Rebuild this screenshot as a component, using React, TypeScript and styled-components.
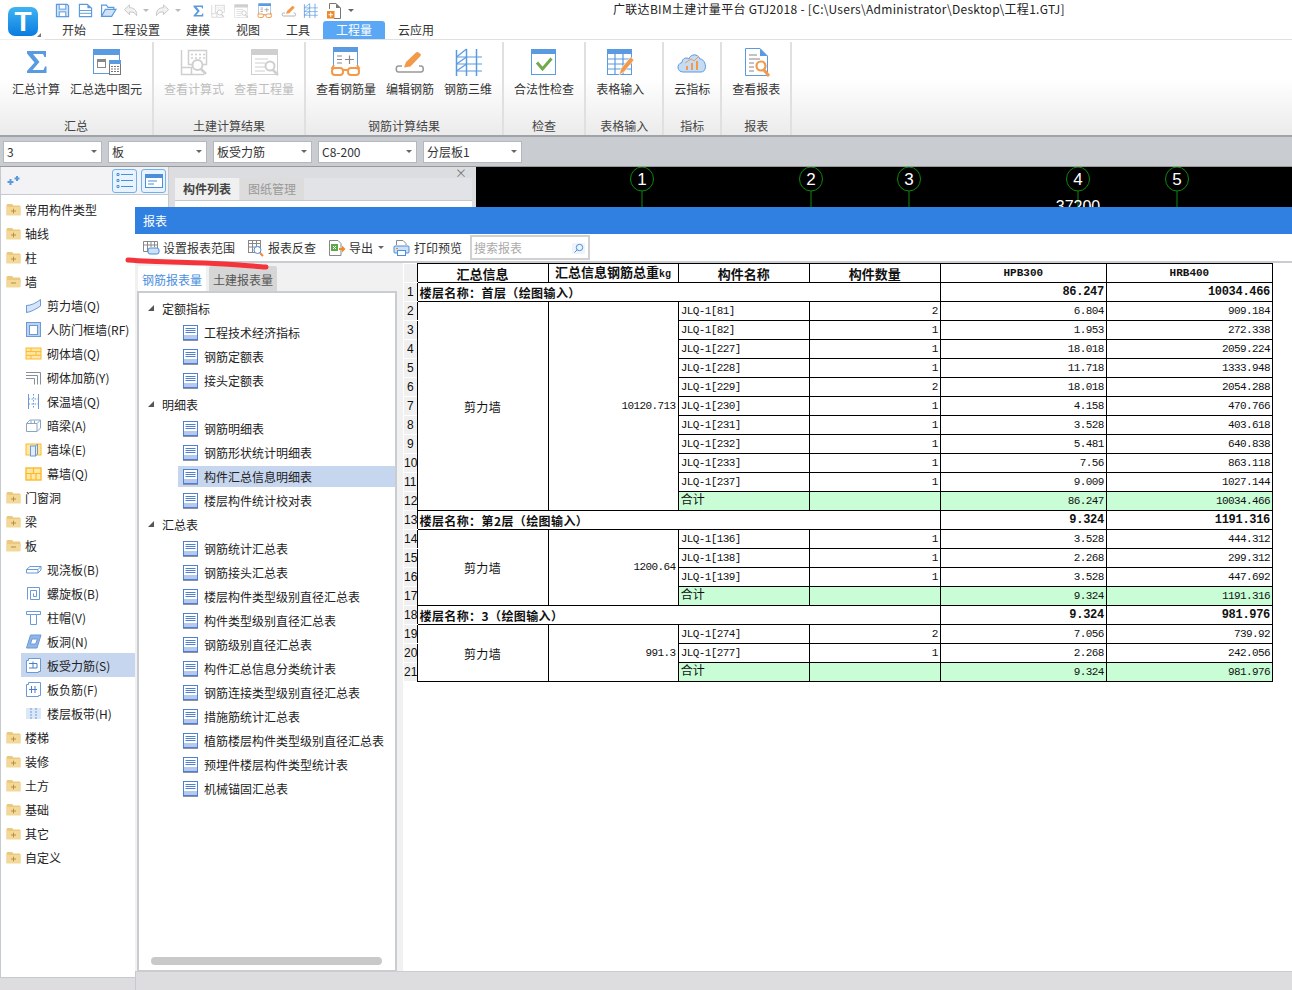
import React from "react";
import styled, { createGlobalStyle } from "styled-components";

const CJK = `"Noto Sans CJK SC", "Liberation Sans", sans-serif`;
const MONO = `"Liberation Mono", "Noto Sans CJK SC", monospace`;
const BLUE = "#5a9ae0";
const ORANGE = "#f39a4a";
const GREY = "#cfcfcf";

const GlobalStyle = createGlobalStyle`
  html, body { margin: 0; padding: 0; background: #fff; }
  body { font-family: ${CJK}; font-size: 12px; color: #222; }
  svg { display: block; flex: none; }
`;

const Caret = styled.span<{ $dim?: boolean }>`
  display: block;
  width: 0;
  height: 0;
  border-left: 3px solid transparent;
  border-right: 3px solid transparent;
  border-top: 3px solid ${(p) => (p.$dim ? "#bbb" : "#666")};
`;

/* ---------- ribbon + quick access icons ---------- */

type IconProps = { size?: number };

const Svg = ({ size = 32, vb = 32, children }: IconProps & { vb?: number; children: React.ReactNode }) => (
  <svg width={size} height={size} viewBox={`0 0 ${vb} ${vb}`} fill="none">
    {children}
  </svg>
);

const SigmaIcon = ({ size }: IconProps) => (
  <Svg size={size}>
    <path d="M7 5H26V11H24.5L23 8H13L19.5 16L12.5 24H23.5L25 20.5H26.5V27H7V25L14.5 16.5L7 7.5Z" fill={BLUE} />
  </Svg>
);

const SelectSumIcon = ({ size }: IconProps) => (
  <Svg size={size}>
    <rect x="3.5" y="3.5" width="26" height="24" fill="#fff" stroke={BLUE} />
    <rect x="3" y="3" width="27" height="6" fill={BLUE} />
    <rect x="7.5" y="15.5" width="8" height="6" stroke="#888" />
    <rect x="7" y="13" width="9" height="2" fill="#888" />
    <rect x="19.5" y="14.5" width="11" height="14" fill="#fff" stroke="#777" />
    <rect x="19" y="14" width="12" height="4" fill={BLUE} />
    <path d="M21 20.5H29M21 23H29M21 25.5H29" stroke="#777" strokeDasharray="2 1" />
  </Svg>
);

const FormulaIcon = ({ size, color = GREY }: IconProps & { color?: string }) => (
  <Svg size={size}>
    <path d="M3.5 4V28.5H26" stroke={color} strokeWidth="1.5" />
    <path d="M3.5 21.5H13.5V28" stroke={color} strokeWidth="1.5" />
    <rect x="10.5" y="4.5" width="18" height="14" fill="#fff" stroke={color} strokeWidth="1.5" />
    <path d="M13 8.5H27M13 12H27" stroke={color} strokeWidth="1.5" strokeDasharray="2 2" />
    <circle cx="19.5" cy="19" r="5" fill="#fff" stroke={color} strokeWidth="2" />
    <path d="M23 23L28 28" stroke={color} strokeWidth="2.5" />
  </Svg>
);

const QuantityIcon = ({ size, color = GREY }: IconProps & { color?: string }) => (
  <Svg size={size}>
    <rect x="3.5" y="3.5" width="26" height="25" fill="#fff" stroke={color} />
    <rect x="3" y="3" width="27" height="6" fill={color} />
    <path d="M7 13H20M7 17H17M7 21H17M7 25H17" stroke={color} strokeWidth="1.2" />
    <circle cx="22" cy="20" r="4.5" fill="#fff" stroke={color} strokeWidth="2" />
    <path d="M25 24L30 29" stroke={color} strokeWidth="2.5" />
  </Svg>
);

const GlassesIcon = ({ size }: IconProps) => (
  <Svg size={size}>
    <rect x="3.5" y="1.5" width="24" height="22" fill="#fff" stroke={BLUE} />
    <rect x="3" y="1" width="25" height="5" fill={BLUE} />
    <path d="M7 10H12M7 13.5H12M7 17H12M15 13.5H24M19.5 9.5V18" stroke="#888" strokeWidth="1.2" />
    <path d="M1.5 23L4 19M29.5 23L27 19" stroke={ORANGE} strokeWidth="2" />
    <rect x="2" y="22" width="11" height="7" rx="3" fill="#fff" stroke={ORANGE} strokeWidth="2" />
    <rect x="18" y="22" width="11" height="7" rx="3" fill="#fff" stroke={ORANGE} strokeWidth="2" />
    <path d="M13 24H18" stroke={ORANGE} strokeWidth="2" />
  </Svg>
);

const EditRebarIcon = ({ size }: IconProps) => (
  <Svg size={size}>
    <path d="M8 20H4.5C1.5 20 1.5 26 4.5 26H27C30 26 30 20 27 20H25" stroke="#999" strokeWidth="1.5" />
    <path d="M10 21.5L12 16L22 6.5C23.5 5 25.5 7 27 8.5L26.5 10L16.5 20.5Z" fill={ORANGE} />
  </Svg>
);

const Rebar3dIcon = ({ size }: IconProps) => (
  <Svg size={size}>
    <path d="M4.5 4V30M14.5 3V30M24.5 3V30" stroke={BLUE} strokeWidth="1.5" />
    <path d="M4 11H30M4 18H30M4 25H30" stroke={BLUE} strokeWidth="1.2" />
    <path d="M4.5 11L14.5 3M4.5 18L14.5 11M4.5 25L14.5 18" stroke={BLUE} strokeWidth="1.2" />
  </Svg>
);

const CheckIcon = ({ size }: IconProps) => (
  <Svg size={size}>
    <rect x="3.5" y="3.5" width="24" height="25" fill="#fff" stroke={BLUE} />
    <rect x="3" y="3" width="25" height="5" fill={BLUE} />
    <path d="M9 16.5L14.5 23L23.5 12.5" stroke="#74a84f" strokeWidth="3" />
  </Svg>
);

const TableInputIcon = ({ size }: IconProps) => (
  <Svg size={size}>
    <rect x="3.5" y="3.5" width="24" height="25" fill="#fff" stroke={BLUE} />
    <rect x="3" y="3" width="25" height="5" fill={BLUE} />
    <path d="M3.5 13H27M3.5 18H27M3.5 23H27M11 8V28M19 8V28" stroke={BLUE} strokeWidth="1.2" />
    <path d="M15 29L17 22.5L26.5 11L30 14L20.5 25.5Z" fill={ORANGE} stroke="#fff" strokeWidth=".6" />
  </Svg>
);

const CloudIcon = ({ size }: IconProps) => (
  <Svg size={size}>
    <path d="M7 26C1 26 0 18 6 16.5C6 12 11 11 13 13C14 8 22 7 24 13C30 13 32 26 25 26Z" fill="#c6dcf5" stroke={BLUE} />
    <path d="M11 24V20M16 24V17M21 24V15" stroke={ORANGE} strokeWidth="2" />
    <path d="M9 17L15 13L18 15L23 10" stroke={ORANGE} />
  </Svg>
);

const ReportIcon = ({ size }: IconProps) => (
  <Svg size={size}>
    <path d="M5.5 2.5H20L27.5 10V29.5H5.5Z" fill="#fff" stroke={BLUE} />
    <path d="M20 2.5V10H27.5Z" fill={BLUE} />
    <path d="M9 9H17M9 13H20M9 17H14M9 21H14M9 25H14" stroke="#888" strokeWidth="1.2" />
    <circle cx="21" cy="20" r="4.5" fill="#fff" stroke={ORANGE} strokeWidth="2.2" />
    <path d="M24 24L29 30" stroke={ORANGE} strokeWidth="3" />
  </Svg>
);

const SaveIcon = () => (
  <Svg size={15} vb={16}>
    <path d="M1.5 1.5H13L14.5 3V14.5H1.5Z" fill="#cfe2f7" stroke={BLUE} strokeWidth="1.2" />
    <rect x="4.5" y="1.5" width="7" height="5" fill="#fff" stroke={BLUE} />
    <rect x="4.5" y="9.5" width="7" height="5" fill="#fff" stroke={BLUE} />
  </Svg>
);

const NewIcon = () => (
  <Svg size={15} vb={16}>
    <path d="M1.5 1.5H10L14.5 5.5V14.5H1.5Z" fill="#fff" stroke={BLUE} strokeWidth="1.2" />
    <path d="M10 1.5V5.5H14.5Z" fill={BLUE} />
    <path d="M1.5 8H14.5M1.5 11H14.5" stroke={BLUE} />
  </Svg>
);

const OpenIcon = () => (
  <Svg size={17} vb={16}>
    <path d="M1.5 13.5V3H6L7.5 5H13V7" stroke={BLUE} strokeWidth="1.1" />
    <path d="M1.5 13.5L5 7H15L11 13.5Z" fill="#cfe2f7" stroke={BLUE} strokeWidth="1.1" />
  </Svg>
);

const ArrowIcon = ({ flip }: { flip?: boolean }) => (
  <svg width="15" height="15" viewBox="0 0 16 16" fill="none" style={flip ? { transform: "scaleX(-1)" } : undefined}>
    <path d="M1.5 7L7 2V5C12 5 15 8 14.5 13.5C13 10.5 11 9.5 7 9.5V12.5Z" fill="#f2f2f2" stroke="#c4c4c4" />
  </svg>
);

const NewPageIcon = () => (
  <Svg size={16} vb={16}>
    <path d="M3.5 6V.5H10L14.5 5V15.5H8" fill="#fff" stroke="#777" />
    <path d="M10 .5V5H14.5Z" fill="#777" />
    <rect x="1" y="8" width="7.5" height="7.5" fill="#ee8a2c" />
    <path d="M4.7 9.5V14M2.5 11.7H7" stroke="#fff" />
  </Svg>
);

/* ---------- sidebar icons ---------- */

const FolderIcon = ({ open }: { open?: boolean }) => (
  <Svg size={15} vb={15}>
    <path d="M.5 3.5C.5 2.5 1 2 2 2H6L7.5 3.5H13C14 3.5 14.5 4 14.5 5V13H.5Z" fill="#ecc97e" />
    <path d={open ? "M.5 6H15L13.5 13.5H.5Z" : "M.5 5H14.5V13.5H.5Z"} fill="#f3d999" />
    <path d="M5 9H10" stroke="#b88f3c" />
    {!open && <path d="M7.5 6.7V11.3" stroke="#b88f3c" />}
  </Svg>
);

const ICON_STROKE = "#6a9ad8";
const YELLOW = "#fdb92c";

const childIcons: Record<string, React.ReactNode> = {
  shear: (
    <>
      <path d="M1.5 8.5C6 8.5 11 6 15.5 2.5V9C11 12 6 15 1.5 15.5Z" fill="#d6e5f7" stroke={ICON_STROKE} />
      <path d="M1.5 8.5V15.5" stroke={ICON_STROKE} />
    </>
  ),
  rf: (
    <>
      <rect x="1.5" y="1.5" width="14" height="14" fill="#bcd3ef" stroke={ICON_STROKE} />
      <rect x="4.5" y="4.5" width="8" height="9" fill="#fff" stroke={ICON_STROKE} />
    </>
  ),
  brick: (
    <>
      <rect x="1" y="3" width="15" height="11" fill="#ffe7a8" stroke={YELLOW} />
      <path d="M1 6.6H16M1 10.3H16M6 3V6.6M11 6.6V10.3M6 10.3V14" stroke={YELLOW} />
    </>
  ),
  bar: <path d="M1 3.5H15.5V15.5M1 6.5H12.5V15.5M1 9.5H9.5V15.5" stroke="#8a8f96" />,
  insulate: (
    <>
      <path d="M3.5 1V16M13.5 1V16" stroke={ICON_STROKE} />
      <path d="M8.5 1V16M3.5 6H13.5M3.5 11H13.5" stroke={ICON_STROKE} strokeDasharray="1.5 1.5" />
    </>
  ),
  beam: (
    <>
      <path d="M1.5 6.5L5 3H15.5V11L12 14.5H1.5Z" fill="#fff" stroke="#8aa4c4" />
      <path d="M1.5 6.5H12V14.5M12 6.5L15.5 3M6 3.5V6.5M9.5 3.5V6.5" stroke="#8aa4c4" />
    </>
  ),
  pier: (
    <>
      <rect x="1" y="3" width="15" height="11" fill="#ffe7a8" stroke={YELLOW} />
      <rect x="5.5" y="5" width="5" height="10" fill="#e3edf9" stroke={ICON_STROKE} />
      <path d="M10.5 5L12.5 3V13L10.5 15" stroke={ICON_STROKE} />
    </>
  ),
  curtain: (
    <>
      <rect x="1" y="3" width="15" height="12" fill="#ffe7a8" stroke={YELLOW} strokeWidth="1.4" />
      <path d="M1 8.5H16M8.5 3V8.5M6 8.5V15M11 8.5V15" stroke={YELLOW} strokeWidth="1.2" />
    </>
  ),
  slab: <path d="M1.5 8.5L5 5.5H16L13 8.5V12H1.5ZM1.5 8.5H13M13 12L16 9V5.5" fill="#fff" stroke={ICON_STROKE} />,
  spiral: <path d="M2.5 14.5V2.5H14.5V14.5H5.5V5.5H11.5V11.5H8.5V8.5" stroke={ICON_STROKE} />,
  cap: <path d="M1.5 2.5H15.5V5.5H11.5V15.5H5.5V5.5H1.5ZM5.5 5.5H11.5" fill="#fff" stroke={ICON_STROKE} />,
  hole: (
    <>
      <path d="M5.5 2H16L12 15H1.5Z" fill="#8fb5e6" stroke={ICON_STROKE} />
      <path d="M7 6H12.5L10.5 11H5.5Z" fill="#fff" stroke={ICON_STROKE} />
    </>
  ),
  rebar: (
    <>
      <path d="M1.5 3.5H3.5V1.5H15.5V14.5H13.5V15.5H1.5Z" fill="#fff" stroke={ICON_STROKE} />
      <path d="M4 6.5H12V11H4M8 4.5V11" stroke="#4a7fc4" />
    </>
  ),
  negative: (
    <>
      <path d="M1.5 3.5H3.5V1.5H15.5V14.5H13.5V15.5H1.5Z" fill="#fff" stroke={ICON_STROKE} />
      <path d="M4 8.5H12M6.5 5V12M10 5V12" stroke="#4a7fc4" />
    </>
  ),
  band: (
    <>
      <rect x="1" y="3" width="15" height="11" fill="#dbe8f8" />
      <path d="M6 3V14M11 3V14" stroke={ICON_STROKE} strokeDasharray="2 1" />
    </>
  ),
};

const ChildIcon = ({ name }: { name: string }) => <Svg size={17} vb={17}>{childIcons[name]}</Svg>;

const DocIcon = () => (
  <Svg size={16} vb={16}>
    <rect x="1" y="1" width="15" height="15" fill="#8b93a3" />
    <rect x="1.5" y=".5" width="14" height="14" fill="#fff" stroke="#4f7fd0" />
    <rect x="2" y="10" width="13" height="4" fill="#b6c8ee" />
    <path d="M3.5 3.5H13.5M3.5 5.5H13.5M3.5 7.5H13.5" stroke="#4f7fd0" />
  </Svg>
);

/* ---------- data ---------- */

const quickSlots: { w: number; node: React.ReactNode }[] = [
  { w: 23, node: <SaveIcon /> },
  { w: 22, node: <NewIcon /> },
  { w: 23, node: <OpenIcon /> },
  { w: 20, node: <ArrowIcon /> },
  { w: 12, node: <Caret $dim /> },
  { w: 20, node: <ArrowIcon flip /> },
  { w: 15, node: <Caret $dim /> },
  { w: 20, node: <SigmaIcon size={16} /> },
  { w: 23, node: <FormulaIcon size={16} /> },
  { w: 24, node: <QuantityIcon size={16} /> },
  { w: 24, node: <GlassesIcon size={16} /> },
  { w: 21, node: <EditRebarIcon size={16} /> },
  { w: 24, node: <Rebar3dIcon size={17} /> },
  { w: 22, node: <NewPageIcon /> },
  { w: 12, node: <Caret /> },
];

const tabs = ["开始", "工程设置", "建模", "视图", "工具", "工程量", "云应用"];

const ribbonGroups: {
  title: string;
  left?: number;
  right?: number;
  items: { label: string; icon: React.ReactNode; off?: boolean }[];
}[] = [
  {
    title: "汇总",
    left: 12,
    items: [
      { label: "汇总计算", icon: <SigmaIcon /> },
      { label: "汇总选中图元", icon: <SelectSumIcon /> },
    ],
  },
  {
    title: "土建计算结果",
    items: [
      { label: "查看计算式", icon: <FormulaIcon />, off: true },
      { label: "查看工程量", icon: <QuantityIcon />, off: true },
    ],
  },
  {
    title: "钢筋计算结果",
    items: [
      { label: "查看钢筋量", icon: <GlassesIcon /> },
      { label: "编辑钢筋", icon: <EditRebarIcon /> },
      { label: "钢筋三维", icon: <Rebar3dIcon /> },
    ],
  },
  { title: "检查", items: [{ label: "合法性检查", icon: <CheckIcon /> }] },
  { title: "表格输入", right: 18, items: [{ label: "表格输入", icon: <TableInputIcon /> }] },
  { title: "指标", items: [{ label: "云指标", icon: <CloudIcon /> }] },
  { title: "报表", items: [{ label: "查看报表", icon: <ReportIcon /> }] },
];

const combos = ["3", "板", "板受力筋", "C8-200", "分层板1"];

const sideTree: { label: string; open?: boolean; kids?: { label: string; icon: string; on?: boolean }[] }[] = [
  { label: "常用构件类型" },
  { label: "轴线" },
  { label: "柱" },
  {
    label: "墙",
    open: true,
    kids: [
      { label: "剪力墙(Q)", icon: "shear" },
      { label: "人防门框墙(RF)", icon: "rf" },
      { label: "砌体墙(Q)", icon: "brick" },
      { label: "砌体加筋(Y)", icon: "bar" },
      { label: "保温墙(Q)", icon: "insulate" },
      { label: "暗梁(A)", icon: "beam" },
      { label: "墙垛(E)", icon: "pier" },
      { label: "幕墙(Q)", icon: "curtain" },
    ],
  },
  { label: "门窗洞" },
  { label: "梁" },
  {
    label: "板",
    open: true,
    kids: [
      { label: "现浇板(B)", icon: "slab" },
      { label: "螺旋板(B)", icon: "spiral" },
      { label: "柱帽(V)", icon: "cap" },
      { label: "板洞(N)", icon: "hole" },
      { label: "板受力筋(S)", icon: "rebar", on: true },
      { label: "板负筋(F)", icon: "negative" },
      { label: "楼层板带(H)", icon: "band" },
    ],
  },
  { label: "楼梯" },
  { label: "装修" },
  { label: "土方" },
  { label: "基础" },
  { label: "其它" },
  { label: "自定义" },
];

const reportTree: { title: string; items: string[] }[] = [
  { title: "定额指标", items: ["工程技术经济指标", "钢筋定额表", "接头定额表"] },
  { title: "明细表", items: ["钢筋明细表", "钢筋形状统计明细表", "构件汇总信息明细表", "楼层构件统计校对表"] },
  {
    title: "汇总表",
    items: [
      "钢筋统计汇总表",
      "钢筋接头汇总表",
      "楼层构件类型级别直径汇总表",
      "构件类型级别直径汇总表",
      "钢筋级别直径汇总表",
      "构件汇总信息分类统计表",
      "钢筋连接类型级别直径汇总表",
      "措施筋统计汇总表",
      "植筋楼层构件类型级别直径汇总表",
      "预埋件楼层构件类型统计表",
      "机械锚固汇总表",
    ],
  },
];

type Section = {
  floor: string;
  hpb: string;
  hrb: string;
  total: string;
  rows: [string, string, string, string][];
};

const sections: Section[] = [
  {
    floor: "楼层名称：首层（绘图输入）",
    hpb: "86.247",
    hrb: "10034.466",
    total: "10120.713",
    rows: [
      ["JLQ-1[81]", "2", "6.804", "909.184"],
      ["JLQ-1[82]", "1", "1.953", "272.338"],
      ["JLQ-1[227]", "1", "18.018", "2059.224"],
      ["JLQ-1[228]", "1", "11.718", "1333.948"],
      ["JLQ-1[229]", "2", "18.018", "2054.288"],
      ["JLQ-1[230]", "1", "4.158", "470.766"],
      ["JLQ-1[231]", "1", "3.528", "403.618"],
      ["JLQ-1[232]", "1", "5.481", "640.838"],
      ["JLQ-1[233]", "1", "7.56", "863.118"],
      ["JLQ-1[237]", "1", "9.009", "1027.144"],
    ],
  },
  {
    floor: "楼层名称：第2层（绘图输入）",
    hpb: "9.324",
    hrb: "1191.316",
    total: "1200.64",
    rows: [
      ["JLQ-1[136]", "1", "3.528", "444.312"],
      ["JLQ-1[138]", "1", "2.268", "299.312"],
      ["JLQ-1[139]", "1", "3.528", "447.692"],
    ],
  },
  {
    floor: "楼层名称：3（绘图输入）",
    hpb: "9.324",
    hrb: "981.976",
    total: "991.3",
    rows: [
      ["JLQ-1[274]", "2", "7.056", "739.92"],
      ["JLQ-1[277]", "1", "2.268", "242.056"],
    ],
  },
];

const axes = [
  { n: "1", x: 166 },
  { n: "2", x: 335 },
  { n: "3", x: 433 },
  { n: "4", x: 602 },
  { n: "5", x: 701 },
];

/* ---------- report table ---------- */

function ReportTable() {
  let row = 0;
  return (
    <Table>
      <colgroup>
        <col width={13} />
        <col width={131} />
        <col width={130} />
        <col width={131} />
        <col width={131} />
        <col width={166} />
        <col width={166} />
      </colgroup>
      <tbody>
        <HeadRow>
          <RowNo />
          <HeadCell>汇总信息</HeadCell>
          <HeadCell>汇总信息钢筋总重<Kg>kg</Kg></HeadCell>
          <HeadCell>构件名称</HeadCell>
          <HeadCell>构件数量</HeadCell>
          <HeadCell $mono>HPB300</HeadCell>
          <HeadCell $mono>HRB400</HeadCell>
        </HeadRow>
        {sections.map((s) => (
          <React.Fragment key={s.floor}>
            <tr>
              <RowNo>{++row}</RowNo>
              <FloorCell colSpan={4}>{s.floor}</FloorCell>
              <NumCell $bold>{s.hpb}</NumCell>
              <NumCell $bold>{s.hrb}</NumCell>
            </tr>
            {s.rows.map((r, i) => (
              <tr key={r[0]}>
                <RowNo>{++row}</RowNo>
                {i === 0 && <TypeCell rowSpan={s.rows.length + 1}>剪力墙</TypeCell>}
                {i === 0 && <NumCell rowSpan={s.rows.length + 1}>{s.total}</NumCell>}
                <NameCell>{r[0]}</NameCell>
                <NumCell>{r[1]}</NumCell>
                <NumCell>{r[2]}</NumCell>
                <NumCell>{r[3]}</NumCell>
              </tr>
            ))}
            <tr>
              <RowNo>{++row}</RowNo>
              <NameCell $green>合计</NameCell>
              <NumCell $green />
              <NumCell $green>{s.hpb}</NumCell>
              <NumCell $green>{s.hrb}</NumCell>
            </tr>
          </React.Fragment>
        ))}
      </tbody>
    </Table>
  );
}

/* ---------- page ---------- */

export default function App() {
  return (
    <Root>
      <GlobalStyle />
      <Header>
        <LogoPanel>
          <svg width="30" height="29" viewBox="0 0 30 29">
            <defs>
              <linearGradient id="logo" x1="0" y1="0" x2="0" y2="1">
                <stop offset="0" stopColor="#3fb4f2" />
                <stop offset="1" stopColor="#0a7ce0" />
              </linearGradient>
            </defs>
            <rect width="30" height="29" rx="7" fill="url(#logo)" />
            <text x="15" y="24" textAnchor="middle" fontFamily="Liberation Sans" fontWeight="700" fontSize="28" fill="#fff">
              T
            </text>
          </svg>
          <LogoGrip />
        </LogoPanel>
        <HeaderMain>
          <TopRow>
            <QuickBar>
              {quickSlots.map((s, i) => (
                <QuickSlot key={i} $w={s.w}>{s.node}</QuickSlot>
              ))}
            </QuickBar>
            <Title>广联达BIM土建计量平台 GTJ2018 - [C:\Users\Administrator\Desktop\工程1.GTJ]</Title>
          </TopRow>
          <TabRow>
            {tabs.map((t) => (
              <Tab key={t} $active={t === "工程量"}>{t}</Tab>
            ))}
          </TabRow>
        </HeaderMain>
      </Header>

      <Ribbon>
        {ribbonGroups.map((g) => (
          <RibbonGroup key={g.title}>
            <RibbonItems $left={g.left} $right={g.right}>
              {g.items.map((it) => (
                <RibbonItem key={it.label} $off={it.off}>
                  {it.icon}
                  <span>{it.label}</span>
                </RibbonItem>
              ))}
            </RibbonItems>
            <GroupTitle>{g.title}</GroupTitle>
          </RibbonGroup>
        ))}
      </Ribbon>

      <ComboBar>
        {combos.map((c) => (
          <Combo key={c}>
            {c}
            <ComboCaret />
          </Combo>
        ))}
      </ComboBar>

      <Main>
        <Sidebar>
          <SideTools>
            <svg width="14" height="12" viewBox="0 0 14 12">
              <path d="M3.5 4V10M.5 7H6.5" stroke={BLUE} strokeWidth="2" />
              <path d="M10 1V6M7.5 3.5H12.5" stroke={BLUE} strokeWidth="2" />
            </svg>
            <SideButtons>
              <SideButton>
                <svg width="18" height="18" viewBox="0 0 18 18">
                  <path d="M5 2.5H17M5 8.5H17M5 14.5H17" stroke="#4a8fd8" />
                  <path d="M1 1.5h2v2h-2zM1 7.5h2v2h-2zM1 13.5h2v2h-2z" stroke="#4a8fd8" fill="none" />
                </svg>
              </SideButton>
              <SideButton>
                <svg width="18" height="18" viewBox="0 0 18 18">
                  <rect x=".5" y="2.5" width="17" height="13" fill="#fff" stroke="#4a8fd8" />
                  <rect x="1" y="2" width="16" height="4" fill="#4a8fd8" />
                  <path d="M3 9H12M3 12H9" stroke="#4a8fd8" />
                </svg>
              </SideButton>
            </SideButtons>
          </SideTools>
          <SideTree>
            {sideTree.map((g) => (
              <React.Fragment key={g.label}>
                <SideGroup>
                  <FolderIcon open={g.open} />
                  {g.label}
                </SideGroup>
                {g.kids?.map((k) => (
                  <SideChild key={k.label} $on={k.on}>
                    <ChildIcon name={k.icon} />
                    {k.label}
                  </SideChild>
                ))}
              </React.Fragment>
            ))}
          </SideTree>
        </Sidebar>

        <ListPanel>
          <ListTop>×</ListTop>
          <ListTabs>
            <ListTab $active>构件列表</ListTab>
            <ListTab>图纸管理</ListTab>
          </ListTabs>
        </ListPanel>

        <Canvas>
          <svg width="816" height="40" viewBox="0 0 816 40">
            {axes.map((a) => (
              <g key={a.n}>
                <ellipse cx={a.x} cy="12" rx="11.5" ry="12" stroke="#0a8a0a" fill="none" />
                <path d={`M${a.x} 24V40`} stroke="#0a8a0a" />
                <text x={a.x} y="18" textAnchor="middle" fill="#fff" fontSize="17" fontFamily="Liberation Sans">
                  {a.n}
                </text>
              </g>
            ))}
            <text x="602" y="45" textAnchor="middle" fill="#fff" fontSize="16" fontFamily="Liberation Sans">
              37200
            </text>
          </svg>
        </Canvas>

        <Dialog>
          <DialogHead>报表</DialogHead>
          <DialogTools>
            <ToolButton>
              <svg width="18" height="18" viewBox="0 0 18 18" fill="none">
                <path d="M1.5 2.5H15.5V9M1.5 2.5V12.5H6M1.5 6H15.5M5.5 2.5V12M9 2.5V8M12.5 2.5V8" stroke="#888" />
                <rect x="6" y="9" width="11" height="6" rx="2" fill="#cfe0f6" stroke="#4a8fd8" />
              </svg>
              设置报表范围
            </ToolButton>
            <ToolButton>
              <svg width="18" height="18" viewBox="0 0 18 18" fill="none">
                <rect x="1.5" y="1.5" width="12" height="12" fill="#fff" stroke="#888" />
                <path d="M1.5 4.5H13.5M1.5 8H13.5M5.5 1.5V13.5M9.5 1.5V13.5" stroke="#888" />
                <circle cx="10.5" cy="11" r="3.5" fill="#fff" stroke="#4a8fd8" />
                <path d="M13 14L16 17" stroke="#ee8a2c" strokeWidth="2" />
              </svg>
              报表反查
            </ToolButton>
            <ToolButton $after={9}>
              <svg width="18" height="18" viewBox="0 0 18 18" fill="none">
                <path d="M1.5 1.5H10L13 4.5V16.5H1.5Z" fill="#fff" stroke="#888" />
                <rect x="3" y="5" width="7" height="7" fill="#5fa84a" />
                <path d="M5 7L8 10M8 7L5 10" stroke="#fff" />
                <path d="M11 9H14V6.5L17.5 10L14 13.5V11H11Z" fill="#ee8a2c" />
              </svg>
              导出
              <ToolCaret />
            </ToolButton>
            <ToolButton $after={8}>
              <svg width="18" height="18" viewBox="0 0 18 18" fill="none">
                <path d="M3.5 6V1.5H10L13 4.5V6" fill="#fff" stroke="#888" />
                <rect x="1" y="7" width="15" height="7" rx="1" fill="#cfe0f6" stroke="#4a8fd8" />
                <rect x="4.5" y="11.5" width="8" height="5" fill="#fff" stroke="#4a8fd8" />
                <path d="M3 9.5H5" stroke="#ee8a2c" />
              </svg>
              打印预览
            </ToolButton>
            <SearchBox>
              搜索报表
              <SearchIcon>
                <svg width="11" height="11" viewBox="0 0 11 11" fill="none">
                  <circle cx="6.5" cy="4.5" r="3.2" stroke="#4a8fd8" />
                  <path d="M4 7L1.5 9.5" stroke="#4a8fd8" />
                </svg>
              </SearchIcon>
            </SearchBox>
          </DialogTools>

          <RedMark width="146" height="16" viewBox="0 0 146 16" fill="none">
            <path d="M3 5C30 7 55 7 80 8C105 9 125 11 141 12" stroke="#f5333b" strokeWidth="5" strokeLinecap="round" />
          </RedMark>

          <DialogBody>
            <ReportPane>
              <PaneTabs>
                <PaneTab $active>钢筋报表量</PaneTab>
                <PaneTab>土建报表量</PaneTab>
              </PaneTabs>
              <TreePanel>
                <ReportTree>
                  {reportTree.map((g) => (
                    <React.Fragment key={g.title}>
                      <TreeGroup>
                        <TreeArrow />
                        {g.title}
                      </TreeGroup>
                      {g.items.map((t) => (
                        <TreeLeaf key={t} $on={t === "构件汇总信息明细表"}>
                          <DocIcon />
                          {t}
                        </TreeLeaf>
                      ))}
                    </React.Fragment>
                  ))}
                </ReportTree>
                <ScrollThumb />
              </TreePanel>
            </ReportPane>
            <SheetArea>
              <ReportTable />
            </SheetArea>
          </DialogBody>
          <DialogFoot />
        </Dialog>
      </Main>
    </Root>
  );
}

/* ---------- styles ---------- */

const Root = styled.div`
  width: 1292px;
  height: 990px;
  display: flex;
  flex-direction: column;
  overflow: hidden;
  background: #fff;
`;

const Header = styled.div`
  display: flex;
  height: 40px;
  flex: none;
`;

const LogoPanel = styled.div`
  position: relative;
  width: 45px;
  padding: 7px 0 0 8px;
  box-sizing: border-box;
  border-bottom: 1px solid #f0f0f0;
`;

const LogoGrip = styled.div`
  position: absolute;
  right: 4px;
  bottom: 2px;
  width: 0;
  height: 0;
  border-left: 4px solid transparent;
  border-bottom: 4px solid #777;
`;

const HeaderMain = styled.div`
  flex: 1;
  display: flex;
  flex-direction: column;
`;

const TopRow = styled.div`
  display: flex;
  height: 21px;
  flex: none;
`;

const QuickBar = styled.div`
  display: flex;
  align-items: center;
  width: 568px;
  padding-left: 10px;
  box-sizing: border-box;
`;

const QuickSlot = styled.div<{ $w: number }>`
  width: ${(p) => p.$w}px;
  display: flex;
  align-items: center;
`;

const Title = styled.div`
  line-height: 17px;
  white-space: nowrap;
  letter-spacing: 0.3px;
  color: #222;
`;

const TabRow = styled.div`
  display: flex;
  height: 18px;
  padding-left: 4px;
  border-bottom: 2px solid #e0e0e0;
  flex: none;
`;

const Tab = styled.div<{ $active?: boolean }>`
  padding: 0 13px;
  line-height: 17px;
  border-radius: 3px 3px 0 0;
  color: ${(p) => (p.$active ? "#fff" : "#333")};
  background: ${(p) => (p.$active ? "#5aa7f5" : "transparent")};
`;

const Ribbon = styled.div`
  display: flex;
  height: 97px;
  flex: none;
  background: linear-gradient(#fff 40%, #ebebeb);
  border-bottom: 2px solid #a0a3a8;
  box-sizing: border-box;
`;

const RibbonGroup = styled.div`
  display: flex;
  flex-direction: column;
  border-right: 2px solid #e0e0e0;
  margin-top: 2px;
`;

const RibbonItems = styled.div<{ $left?: number; $right?: number }>`
  flex: 1;
  display: flex;
  gap: 10px;
  padding: 0 ${(p) => p.$right ?? 10}px 0 ${(p) => p.$left ?? 10}px;
`;

const RibbonItem = styled.div<{ $off?: boolean }>`
  display: flex;
  flex-direction: column;
  align-items: center;
  padding-top: 4px;
  white-space: nowrap;
  line-height: 14px;
  gap: 4px;
  color: ${(p) => (p.$off ? "#bdbdbd" : "#333")};
`;

const GroupTitle = styled.div`
  text-align: center;
  line-height: 14px;
  margin-bottom: 2px;
  color: #444;
`;

const ComboBar = styled.div`
  display: flex;
  align-items: center;
  gap: 6px;
  height: 30px;
  flex: none;
  padding-left: 3px;
  background: #c9ccd1;
  border-bottom: 1px solid #999;
  box-sizing: border-box;
`;

const Combo = styled.div`
  position: relative;
  width: 99px;
  height: 22px;
  box-sizing: border-box;
  padding-left: 3px;
  line-height: 20px;
  font-size: 12px;
  background: #fff;
  border: 1px solid #b4b7bc;
  color: #333;
`;

const ComboCaret = styled.span`
  position: absolute;
  right: 4px;
  top: 8px;
  width: 0;
  height: 0;
  border-left: 3px solid transparent;
  border-right: 3px solid transparent;
  border-top: 3px solid #666;
`;

const Main = styled.div`
  position: relative;
  flex: 1;
  display: flex;
  min-height: 0;
  background: #dddde0;
`;

const Sidebar = styled.div`
  width: 169px;
  margin-bottom: 12px;
  display: flex;
  flex-direction: column;
  flex: none;
  background: #fff;
  border-left: 1px solid #c5c9d0;
  border-bottom: 1px solid #c5c9d0;
  border-right: 1px solid #c5c9d0;
  box-sizing: border-box;
`;

const SideTools = styled.div`
  display: flex;
  align-items: center;
  justify-content: space-between;
  height: 27px;
  padding: 0 2px 0 6px;
  border-bottom: 1px solid #c5c9d0;
  background: #f3f3f5;
  flex: none;
`;

const SideButtons = styled.div`
  display: flex;
  gap: 4px;
`;

const SideButton = styled.div`
  width: 25px;
  height: 24px;
  box-sizing: border-box;
  display: flex;
  align-items: center;
  justify-content: center;
  background: #e9f3fd;
  border: 1px solid #6fb1ee;
  border-radius: 3px;
`;

const SideTree = styled.div`
  padding-top: 2px;
`;

const SideGroup = styled.div`
  height: 24px;
  display: flex;
  align-items: center;
  gap: 4px;
  padding-left: 5px;
`;

const SideChild = styled.div<{ $on?: boolean }>`
  height: 24px;
  display: flex;
  align-items: center;
  gap: 5px;
  margin-left: 20px;
  padding-left: 4px;
  background: ${(p) => (p.$on ? "#c6d6ee" : "transparent")};
`;

const ListPanel = styled.div`
  width: 297px;
  margin-left: 6px;
  flex: none;
  background: #fff;
`;

const ListTop = styled.div`
  height: 11px;
  line-height: 11px;
  padding-right: 5px;
  text-align: right;
  font-size: 12px;
  color: #777;
  background: #dcdde0;
`;

const ListTabs = styled.div`
  display: flex;
  height: 22px;
  background: #e2e3e6;
  border-bottom: 1px solid #c5c9d0;
`;

const ListTab = styled.div<{ $active?: boolean }>`
  width: 64px;
  text-align: center;
  line-height: 22px;
  margin-right: 1px;
  font-weight: ${(p) => (p.$active ? 700 : 400)};
  color: ${(p) => (p.$active ? "#444" : "#999")};
  background: ${(p) => (p.$active ? "#f0f0f0" : "#dcdcdc")};
`;

const Canvas = styled.div`
  margin-left: 4px;
  flex: 1;
  height: 40px;
  background: #000;
  overflow: hidden;
`;

const Dialog = styled.div`
  position: absolute;
  left: 135px;
  top: 40px;
  right: 0;
  bottom: 0;
  display: flex;
  flex-direction: column;
  background: #fff;
`;

const DialogHead = styled.div`
  height: 27px;
  flex: none;
  padding-left: 8px;
  line-height: 27px;
  color: #fff;
  background: #2f80e0;
`;

const DialogTools = styled.div`
  height: 29px;
  flex: none;
  box-sizing: border-box;
  display: flex;
  align-items: center;
  padding-left: 7px;
  background: #fff;
  border-bottom: 2px solid #c9ccd1;
`;

const ToolButton = styled.div<{ $after?: number }>`
  display: flex;
  align-items: center;
  gap: 3px;
  margin-right: ${(p) => p.$after ?? 12}px;
  white-space: nowrap;
  color: #333;
`;

const ToolCaret = styled.span`
  width: 0;
  height: 0;
  margin-left: 2px;
  border-left: 3px solid transparent;
  border-right: 3px solid transparent;
  border-top: 3px solid #666;
`;

const SearchBox = styled.div`
  position: relative;
  width: 120px;
  height: 25px;
  box-sizing: border-box;
  padding-left: 2px;
  line-height: 21px;
  border: 2px solid #d0d0d0;
  color: #aaa;
`;

const SearchIcon = styled.span`
  position: absolute;
  right: 3px;
  top: 6px;
  padding: 0 1px;
  background: #eef4fc;
`;

const RedMark = styled.svg`
  position: absolute;
  left: -10px;
  top: 48px;
  z-index: 2;
`;

const DialogBody = styled.div`
  flex: 1;
  display: flex;
  min-height: 0;
`;

const ReportPane = styled.div`
  width: 268px;
  flex: none;
  box-sizing: border-box;
  display: flex;
  flex-direction: column;
  padding: 3px 6px 0 2px;
  background: #f1f1f1;
`;

const PaneTabs = styled.div`
  display: flex;
  gap: 3px;
  height: 25px;
  flex: none;
  padding-left: 1px;
`;

const PaneTab = styled.div<{ $active?: boolean }>`
  width: 68px;
  text-align: center;
  line-height: 27px;
  border-radius: 2px 2px 0 0;
  color: ${(p) => (p.$active ? "#4a8fe0" : "#555")};
  background: ${(p) => (p.$active ? "#fff" : "#d6d6d6")};
`;

const TreePanel = styled.div`
  flex: 1;
  min-height: 0;
  display: flex;
  flex-direction: column;
  background: #fff;
  border: 2px solid #c9ccd1;
  border-bottom-width: 1px;
`;

const ReportTree = styled.div`
  flex: 1;
  display: flex;
  flex-direction: column;
  padding-top: 3px;
`;

const TreeGroup = styled.div`
  height: 24px;
  display: flex;
  align-items: center;
  padding-left: 9px;
  gap: 8px;
`;

const TreeArrow = styled.span`
  width: 0;
  height: 0;
  border-left: 6px solid transparent;
  border-bottom: 6px solid #555;
`;

const TreeLeaf = styled.div<{ $on?: boolean }>`
  height: 21px;
  margin: 2px 0 1px 39px;
  padding-left: 4px;
  display: flex;
  align-items: center;
  gap: 6px;
  white-space: nowrap;
  background: ${(p) => (p.$on ? "#c6d6ee" : "transparent")};
`;

const ScrollThumb = styled.div`
  height: 8px;
  flex: none;
  margin: 0 13px 5px 12px;
  border-radius: 4px;
  background: #c9c9c9;
`;

const DialogFoot = styled.div`
  height: 19px;
  flex: none;
  background: #dddde0;
  border-left: 1px solid #c5c9d0;
  border-top: 1px solid #c9ccd1;
  box-sizing: border-box;
`;

const SheetArea = styled.div`
  flex: 1;
  min-width: 0;
  padding-left: 1px;
  background: #fff;
`;

const Table = styled.table`
  border-collapse: collapse;
  table-layout: fixed;
  width: 869px;
  font-size: 12px;
  color: #111;
`;

const HeadRow = styled.tr`
  height: 16px;
`;

const Cell = styled.td`
  padding: 0 2px;
  border: 1px solid #000;
  height: 18px;
  line-height: 17px;
  overflow: hidden;
  white-space: nowrap;
`;

const RowNo = styled.td`
  padding: 0;
  border: 0;
  border-right: 1px solid #000;
  border-bottom: 1px solid #fff;
  text-align: center;
  font-family: "Liberation Sans", sans-serif;
  font-size: 12px;
  line-height: 15px;
  background: #f0f0f0;
`;

const HeadCell = styled(Cell)<{ $mono?: boolean }>`
  height: 15px;
  line-height: 15px;
  text-align: center;
  font-weight: 700;
  font-family: ${(p) => (p.$mono ? MONO : CJK)};
  font-size: ${(p) => (p.$mono ? "11px" : "13px")};
`;

const Kg = styled.span`
  font-family: ${MONO};
  font-size: 10px;
`;

const FloorCell = styled(Cell)`
  font-weight: 700;
  letter-spacing: 0.4px;
`;

const TypeCell = styled(Cell)`
  text-align: center;
  letter-spacing: 0.4px;
  background: #fff;
`;

const NameCell = styled(Cell)<{ $green?: boolean }>`
  font-family: ${MONO};
  font-size: ${(p) => (p.$green ? "12px" : "11px")};
  letter-spacing: ${(p) => (p.$green ? "0" : "-0.6px")};
  background: ${(p) => (p.$green ? "#c9fdd6" : "#fff")};
`;

const NumCell = styled(Cell)<{ $bold?: boolean; $green?: boolean }>`
  text-align: right;
  font-family: ${MONO};
  font-size: ${(p) => (p.$bold ? "12px" : "11px")};
  letter-spacing: ${(p) => (p.$bold ? "-0.3px" : "-0.6px")};
  font-weight: ${(p) => (p.$bold ? 700 : 400)};
  background: ${(p) => (p.$green ? "#c9fdd6" : "#fff")};
`;
